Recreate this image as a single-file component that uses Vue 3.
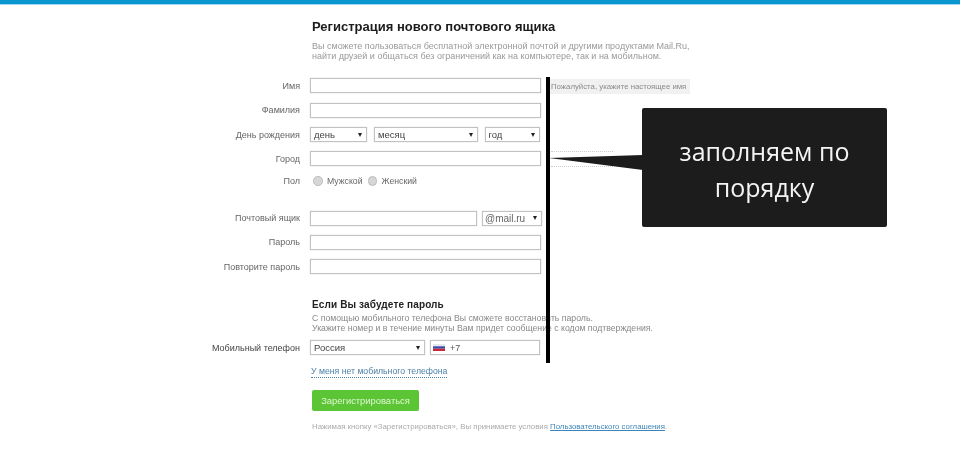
<script setup>
const topRows = [
  { label: 'Имя' },
  { label: 'Фамилия' },
]
const dateSelects = [
  { text: 'день', cls: 'd1' },
  { text: 'месяц', cls: 'd2' },
  { text: 'год', cls: 'd3' },
]
</script>

<template>
  <div class="page">
    <div class="topbar"></div>
    <main class="form">
      <h1 class="title">Регистрация нового почтового ящика</h1>
      <p class="intro">Вы сможете пользоваться бесплатной электронной почтой и другими продуктами Mail.Ru,<br>найти друзей и общаться без ограничений как на компьютере, так и на мобильном.</p>

      <div class="rows">
        <div v-for="r in topRows" :key="r.label" class="row">
          <label class="lbl">{{ r.label }}</label>
          <div class="input full"></div>
        </div>
        <div class="row">
          <label class="lbl">День рождения</label>
          <div class="fields date">
            <div v-for="s in dateSelects" :key="s.text" class="select" :class="s.cls"><span>{{ s.text }}</span><i class="arrow"></i></div>
          </div>
        </div>
        <div class="row">
          <label class="lbl">Город</label>
          <div class="input full"></div>
        </div>
        <div class="row gender">
          <label class="lbl">Пол</label>
          <div class="fields radios">
            <span class="radio"></span><span class="rtext">Мужской</span>
            <span class="radio r2"></span><span class="rtext">Женский</span>
          </div>
        </div>
        <div class="row mail">
          <label class="lbl">Почтовый ящик</label>
          <div class="fields mailf">
            <div class="input mailbox"></div>
            <div class="select domain"><span>@mail.ru</span><i class="arrow"></i></div>
          </div>
        </div>
        <div class="row">
          <label class="lbl">Пароль</label>
          <div class="input full"></div>
        </div>
        <div class="row">
          <label class="lbl">Повторите пароль</label>
          <div class="input full"></div>
        </div>
      </div>

      <h2 class="subtitle">Если Вы забудете пароль</h2>
      <p class="intro sub">С помощью мобильного телефона Вы сможете восстановить пароль.<br>Укажите номер и в течение минуты Вам придет сообщение с кодом подтверждения.</p>

      <div class="row phone">
        <label class="lbl dark">Мобильный телефон</label>
        <div class="fields phonef">
          <div class="select country"><span>Россия</span><i class="arrow"></i></div>
          <div class="input tel">
            <svg class="flag" width="12" height="7" viewBox="0 0 12 7"><rect width="12" height="2.300" fill="#e8e8f0"/><rect y="2.300" width="12" height="2.400" fill="#3a4aa8"/><rect y="4.700" width="12" height="2.300" fill="#c8283c"/></svg>
            <span>+7</span>
          </div>
        </div>
      </div>

      <a class="nophone">У меня нет мобильного телефона</a>
      <button class="submit">Зарегистрироваться</button>
      <p class="terms">Нажимая кнопку «Зарегистрироваться», Вы принимаете условия <a>Пользовательского соглашения</a>.</p>
    </main>

    <div class="vline"></div>
    <div class="hint">Пожалуйста, укажите настоящее имя</div>
    <div class="dots"></div>
    <svg class="tail" width="96" height="24" viewBox="0 0 96 24"><path d="M0 7L94 4V19Z" fill="#1c1c1c"/></svg>
    <div class="callout">заполняем по<br>порядку</div>
  </div>
</template>

<style>
html, body { margin: 0; background: #fff; }
</style>

<style scoped>
.page {
  position: relative;
  width: 960px;
  height: 450px;
  overflow: hidden;
  background: #fff;
  font-family: "Liberation Sans", Arial, sans-serif;
  color: #555;
  filter: blur(.3px);
}
.topbar {
  height: 4px;
  background: #0a96cf;
  border-bottom: 1px solid #9fd8ee;
}
.form { padding: 13px 0 0 0; }
.title {
  margin: 0 0 0 312px;
  font-size: 13px;
  line-height: 17px;
  font-weight: 700;
  color: #1c1c1c;
}
.intro {
  margin: 6px 0 0 312px;
  font-size: 9px;
  line-height: 10px;
  color: #999;
}
.rows { margin-top: 12.850px; display: flex; flex-direction: column; }
.row {
  display: flex;
  align-items: center;
  height: 24.300px;
}
.lbl {
  flex: none;
  width: 300px;
  box-sizing: border-box;
  text-align: right;
  font-size: 9px;
  color: #666;
  margin-right: 10px;
}
.lbl.dark { color: #444; }
.fields { display: flex; align-items: center; }
.input, .select {
  box-sizing: border-box;
  height: 15px;
  border: 1px solid #c2c2c2;
  background: #fff;
  box-shadow: 0 0 1px #c8c8c8;
}
.full { width: 231px; }
.select {
  display: flex;
  align-items: center;
  justify-content: space-between;
  padding: 0 4px 0 3px;
  font-size: 9.500px;
  color: #444;
}
.arrow {
  width: 0;
  height: 0;
  border-left: 2.500px solid transparent;
  border-right: 2.500px solid transparent;
  border-top: 4.500px solid #222;
}
.d1 { width: 57px; margin-right: 7px; }
.d2 { width: 103.500px; margin-right: 7px; }
.d3 { width: 55px; }
.gender { height: 20px; }
.radios { font-size: 8.700px; color: #666; padding-left: 3px; }
.radio {
  box-sizing: border-box;
  width: 9.500px;
  height: 9.500px;
  border-radius: 50%;
  background: #d6d6d6;
  border: 1px solid #bbb;
  margin-right: 4.500px;
}
.r2 { margin-left: 5px; }
.mail { margin-top: 15px; }
.mailbox { width: 167px; margin-right: 5px; }
.domain { width: 60px; padding-left: 2px; font-size: 10px; color: #666; }
.subtitle {
  margin: 19px 0 0 312px;
  font-size: 10px;
  line-height: 13px;
  font-weight: 700;
  letter-spacing: .13px;
  color: #222;
}
.sub { margin-top: 2.500px; font-size: 8.700px; color: #888; }
.phone { margin-top: 2.300px; }
.country { width: 115px; margin-right: 5px; }
.tel {
  width: 110px;
  display: flex;
  align-items: center;
  padding-left: 2px;
  font-size: 9px;
  color: #555;
}
.flag { margin-right: 5px; }
.nophone {
  display: inline-block;
  margin: 5px 0 0 311px;
  font-size: 8.700px;
  line-height: 11px;
  color: #4a7fa8;
  border-bottom: 1px dotted #4a7fa8;
}
.submit {
  display: block;
  margin: 11.500px 0 0 312px;
  width: 107px;
  height: 21.500px;
  padding: 0;
  border: 0;
  border-radius: 2px;
  background: #5cc535;
  color: #dff5d2;
  font-family: inherit;
  font-size: 9.400px;
}
.terms {
  margin: 9.500px 0 0 312px;
  font-size: 7.800px;
  line-height: 11px;
  color: #aaa;
}
.terms a { color: #3d85b8; text-decoration: underline; }

.vline {
  position: absolute;
  left: 545.500px;
  top: 77px;
  width: 4px;
  height: 286px;
  background: #000;
}
.hint {
  position: absolute;
  left: 550px;
  top: 79px;
  width: 140px;
  height: 15px;
  box-sizing: border-box;
  padding-left: 1px;
  background: #f1f1f1;
  font-size: 7.800px;
  line-height: 15px;
  color: #8a8a8a;
  white-space: nowrap;
}
.dots {
  position: absolute;
  left: 551px;
  top: 151px;
  width: 62px;
  height: 14px;
  border-top: 1px dotted #ccc;
  border-bottom: 1px dotted #ccc;
}
.tail { position: absolute; left: 549px; top: 151px; }
.callout {
  position: absolute;
  left: 642px;
  top: 108px;
  width: 245px;
  height: 119px;
  padding-top: 25px;
  box-sizing: border-box;
  border-radius: 2px;
  background: #1c1c1c;
  color: #f4f4f4;
  text-align: center;
  font-family: "Open Sans", sans-serif;
  font-size: 25px;
  line-height: 36px;
}
</style>
